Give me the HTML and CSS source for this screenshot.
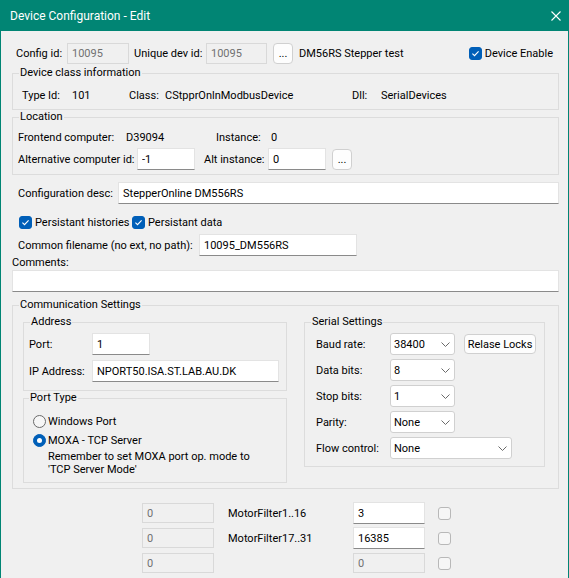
FILE: index.html
```html
<!DOCTYPE html>
<html lang="en">
<head>
    <meta charset="UTF-8">
    <title>Device Configuration - Edit</title>
    <link rel="stylesheet" href="styles.css">
</head>
<body>
    <div class="window">
        <!-- TITLE BAR -->
        <div class="titlebar">
            <span class="title">Device Configuration - Edit</span>
            <svg class="close" width="10" height="10" viewBox="0 0 10 10">
                <path d="M0.5 0.5 L9.5 9.5 M9.5 0.5 L0.5 9.5" stroke="#fff" stroke-width="1.1" fill="none"/>
            </svg>
        </div>

        <div class="content">
            <!-- IDS -->
            <div class="row top-row">
                <span class="lbl" style="width:51px;margin-left:4px">Config id:</span>
                <input class="edit h21" style="width:62px" type="text" value="10095" disabled>
                <span class="lbl" style="width:72px;margin-left:5px">Unique dev id:</span>
                <input class="edit h21" style="width:61px" type="text" value="10095" disabled>
                <button class="btn dots" style="margin-left:6px">...</button>
                <span class="lbl" style="margin-left:6px">DM56RS Stepper test</span>
                <label class="chk enable">
                    <span class="check on"><svg viewBox="0 0 13 13"><path d="M3.4 6.7 L5.5 8.7 L9.6 4.3" fill="none" stroke="#fff" stroke-width="1.1"/></svg></span>
                    <span>Device Enable</span>
                </label>
            </div>

            <!-- DEVICE CLASS -->
            <fieldset class="group dev-class">
                <legend>Device class information</legend>
                <div class="row dc-row">
                    <span style="width:50px">Type Id:</span>
                    <span style="width:57px">101</span>
                    <span style="width:36px">Class:</span>
                    <span style="width:187px">CStpprOnlnModbusDevice</span>
                    <span style="width:29px">Dll:</span>
                    <span>SerialDevices</span>
                </div>
            </fieldset>

            <!-- LOCATION -->
            <fieldset class="group location">
                <legend>Location</legend>
                <div class="row loc-row1">
                    <span style="width:108px">Frontend computer:</span>
                    <span style="width:90px">D39094</span>
                    <span style="width:55px">Instance:</span>
                    <span>0</span>
                </div>
                <div class="row loc-row2">
                    <span style="width:119px">Alternative computer id:</span>
                    <input class="edit" style="width:58px" type="text" value="-1">
                    <span style="width:64px;margin-left:9px">Alt instance:</span>
                    <input class="edit" style="width:58px" type="text" value="0">
                    <button class="btn dots" style="margin-left:6px">...</button>
                </div>
            </fieldset>

            <div class="row desc-row">
                <span style="width:100px;margin-left:6px">Configuration desc:</span>
                <input class="edit grow" type="text" value="StepperOnline DM556RS">
            </div>

            <div class="row persist-row">
                <label class="chk" style="width:113px;margin-left:7px">
                    <span class="check on"><svg viewBox="0 0 13 13"><path d="M3.4 6.7 L5.5 8.7 L9.6 4.3" fill="none" stroke="#fff" stroke-width="1.1"/></svg></span>
                    <span>Persistant histories</span>
                </label>
                <label class="chk">
                    <span class="check on"><svg viewBox="0 0 13 13"><path d="M3.4 6.7 L5.5 8.7 L9.6 4.3" fill="none" stroke="#fff" stroke-width="1.1"/></svg></span>
                    <span>Persistant data</span>
                </label>
            </div>

            <div class="row file-row">
                <span style="width:181px;margin-left:6px">Common filename (no ext, no path):</span>
                <input class="edit" style="width:158px" type="text" value="10095_DM556RS">
            </div>

            <div class="comments-lbl">Comments:</div>
            <input class="edit comments" type="text" value="">

            <!-- COMMUNICATION -->
            <fieldset class="group comm">
                <legend>Communication Settings</legend>
                <div class="comm-body">
                    <div class="col-left">
                        <fieldset class="group address">
                            <legend>Address</legend>
                            <div class="row form-row">
                                <span style="width:63px">Port:</span>
                                <input class="edit" style="width:58px" type="text" value="1">
                            </div>
                            <div class="row form-row">
                                <span style="width:63px">IP Address:</span>
                                <input class="edit" style="width:187px" type="text" value="NPORT50.ISA.ST.LAB.AU.DK">
                            </div>
                        </fieldset>

                        <fieldset class="group port-type">
                            <legend>Port Type</legend>
                            <div class="row radio-row">
                                <span class="radio"></span>
                                <span>Windows Port</span>
                            </div>
                            <div class="row radio-row">
                                <span class="radio on"></span>
                                <span>MOXA - TCP Server</span>
                            </div>
                            <div class="note">Remember to set MOXA port op. mode to<br>'TCP Server Mode'</div>
                        </fieldset>
                    </div>

                    <fieldset class="group serial">
                        <legend>Serial Settings</legend>
                        <div class="row form-row">
                            <span class="slbl">Baud rate:</span>
                            <div class="combo" style="width:65px"><span>38400</span><svg class="chev" viewBox="0 0 9 5"><path d="M0.5 0.5 L4.5 4.5 L8.5 0.5" fill="none" stroke="#6a6a6a"/></svg></div>
                            <button class="btn release">Relase Locks</button>
                        </div>
                        <div class="row form-row">
                            <span class="slbl">Data bits:</span>
                            <div class="combo" style="width:65px"><span>8</span><svg class="chev" viewBox="0 0 9 5"><path d="M0.5 0.5 L4.5 4.5 L8.5 0.5" fill="none" stroke="#6a6a6a"/></svg></div>
                        </div>
                        <div class="row form-row">
                            <span class="slbl">Stop bits:</span>
                            <div class="combo" style="width:65px"><span>1</span><svg class="chev" viewBox="0 0 9 5"><path d="M0.5 0.5 L4.5 4.5 L8.5 0.5" fill="none" stroke="#6a6a6a"/></svg></div>
                        </div>
                        <div class="row form-row">
                            <span class="slbl">Parity:</span>
                            <div class="combo" style="width:65px"><span>None</span><svg class="chev" viewBox="0 0 9 5"><path d="M0.5 0.5 L4.5 4.5 L8.5 0.5" fill="none" stroke="#6a6a6a"/></svg></div>
                        </div>
                        <div class="row form-row">
                            <span class="slbl">Flow control:</span>
                            <div class="combo" style="width:122px"><span>None</span><svg class="chev" viewBox="0 0 9 5"><path d="M0.5 0.5 L4.5 4.5 L8.5 0.5" fill="none" stroke="#6a6a6a"/></svg></div>
                        </div>
                    </fieldset>
                </div>
            </fieldset>

            <!-- MOTOR FILTERS -->
            <div class="filters">
                <div class="row filter-row">
                    <input class="edit h20" type="text" value="0" disabled>
                    <span class="flbl">MotorFilter1..16</span>
                    <input class="edit" type="text" value="3">
                    <span class="check"></span>
                </div>
                <div class="row filter-row">
                    <input class="edit h20" type="text" value="0" disabled>
                    <span class="flbl">MotorFilter17..31</span>
                    <input class="edit" type="text" value="16385">
                    <span class="check"></span>
                </div>
                <div class="row filter-row">
                    <input class="edit h20" type="text" value="0" disabled>
                    <span class="flbl"></span>
                    <input class="edit h20" type="text" value="0" disabled>
                    <span class="check"></span>
                </div>
            </div>
        </div>
    </div>
</body>
</html>
```

FILE: styles.css
```css
body {
    margin: 0;
    font-family: Roboto, "Open Sans", sans-serif;
    font-size: 11px;
    color: #000;
    background: #f0f0f0;
}

.window {
    width: 569px;
    height: 578px;
    box-sizing: border-box;
    border-left: 1px solid #018574;
    border-right: 1px solid #018574;
    background: #f0f0f0;
    overflow: hidden;
}

.titlebar {
    height: 31px;
    background: #018574;
    color: #fff;
    display: flex;
    align-items: center;
    justify-content: space-between;
    padding: 0 7px 0 9px;
    font-size: 12px;
}

.close {
    display: block;
}

.content {
    padding: 12px 9px 0 11px;
}

.row {
    display: flex;
    align-items: center;
}

.row > span {
    flex: none;
    white-space: nowrap;
}

/* inputs */
.edit {
    box-sizing: border-box;
    height: 22px;
    margin: 0;
    padding: 0 0 0 4px;
    border: 1px solid #e3e3e3;
    border-bottom-color: #8a8a8a;
    background: #fff;
    font: inherit;
    color: #000;
    outline: none;
    flex: none;
}

.edit:disabled {
    background: #f0f0f0;
    border-color: #d9d9d9;
    color: #707070;
}

.edit.h21 {
    height: 21px;
}

.edit.h20 {
    height: 20px;
}

.edit.grow {
    flex: 1;
    min-width: 0;
}

.btn {
    box-sizing: border-box;
    height: 21px;
    margin: 0;
    padding: 0;
    border: 1px solid #d0d0d0;
    border-radius: 4px;
    background: #fdfdfd;
    font: inherit;
    color: #000;
    flex: none;
}

.btn.dots {
    width: 20px;
    line-height: 17px;
}

/* checkboxes */
.chk {
    display: flex;
    align-items: center;
    gap: 3px;
    flex: none;
    white-space: nowrap;
}

.check {
    box-sizing: border-box;
    width: 13px;
    height: 13px;
    border: 1px solid #a8a8a8;
    border-radius: 3px;
    background: #f6f6f6;
    display: block;
    flex: none;
}

.check svg {
    display: block;
    width: 13px;
    height: 13px;
    margin: -1px;
}

.check.on {
    background: #005fb8;
    border-color: #005fb8;
}

.radio {
    box-sizing: border-box;
    width: 13px;
    height: 13px;
    border: 1px solid #6a6a6a;
    border-radius: 50%;
    background: #f6f6f6;
    display: flex;
    align-items: center;
    justify-content: center;
    margin-right: 2px;
}

.radio.on {
    background: #005fb8;
    border-color: #005fb8;
}

.radio.on::after {
    content: "";
    width: 5px;
    height: 5px;
    border-radius: 50%;
    background: #fff;
}

/* group boxes: legend sits 6px in from the box edge */
.group {
    margin: 0;
    padding: 0;
    border: 1px solid #dcdcdc;
    min-width: 0;
}

.group legend {
    margin-left: 6px;
    padding: 0 1px;
    line-height: 14px;
}

.top-row {
    height: 21px;
}

.enable {
    margin-left: auto;
    margin-right: 6px;
}

.dev-class {
    margin-top: 2px;
    padding: 7px 0 6px 9px;
}

.dev-class > legend {
    margin-left: -3px;
}

.dc-row {
    height: 16px;
}

.location {
    padding: 5px 0 4px 5px;
}

.location > legend {
    margin-left: 1px;
}

.loc-row1 {
    height: 16px;
}

.loc-row2 {
    height: 22px;
    margin-top: 3px;
}

.desc-row {
    height: 22px;
    margin-top: 7px;
}

.persist-row {
    height: 16px;
    margin-top: 10px;
}

.file-row {
    height: 22px;
    margin-top: 4px;
}

.comments-lbl {
    line-height: 13px;
    height: 13px;
}

.comments {
    display: block;
    width: 547px;
    margin-top: 1px;
}

/* communication */
.comm {
    margin-top: 6px;
    padding: 3px 0 5px 10px;
}

.comm > legend {
    margin-left: -4px;
}

.comm-body {
    display: flex;
    align-items: flex-start;
}

.col-left {
    width: 264px;
}

.address {
    padding: 4px 0 8px 5px;
}

.address > legend {
    margin-left: 1px;
}

.form-row {
    height: 22px;
}

.address .form-row + .form-row {
    margin-top: 5px;
}

.port-type {
    padding: 8px 0 6px 9px;
}

.port-type > legend {
    margin-left: -4px;
}

.radio-row {
    height: 16px;
}

.radio-row + .radio-row {
    margin-top: 3px;
}

.note {
    margin-left: 15px;
    padding-top: 2px;
    line-height: 13px;
}

.serial {
    width: 241px;
    box-sizing: border-box;
    margin-left: 17px;
    padding: 4px 0 7px 11px;
}

.serial > legend {
    margin-left: -5px;
}

.serial .form-row + .form-row {
    margin-top: 4px;
}

.slbl {
    width: 74px;
}

.combo {
    box-sizing: border-box;
    height: 22px;
    border: 1px solid #d0d0d0;
    border-radius: 3px;
    background: #fff;
    display: flex;
    align-items: center;
    justify-content: space-between;
    padding: 0 4px 0 3px;
    flex: none;
}

.chev {
    width: 9px;
    height: 5px;
    display: block;
}

.btn.release {
    width: 72px;
    height: 20px;
    margin-left: 9px;
}

/* motor filters */
.filters {
    margin-top: 13px;
}

.filter-row {
    height: 22px;
}

.filter-row + .filter-row {
    margin-top: 3px;
}

.filter-row .edit {
    width: 72px;
}

.filter-row .edit:first-child {
    margin-left: 130px;
}

.flbl {
    width: 125px;
    margin-left: 14px;
}

.filter-row .check {
    margin-left: 13px;
    border-color: #b8b8b8;
}
```
